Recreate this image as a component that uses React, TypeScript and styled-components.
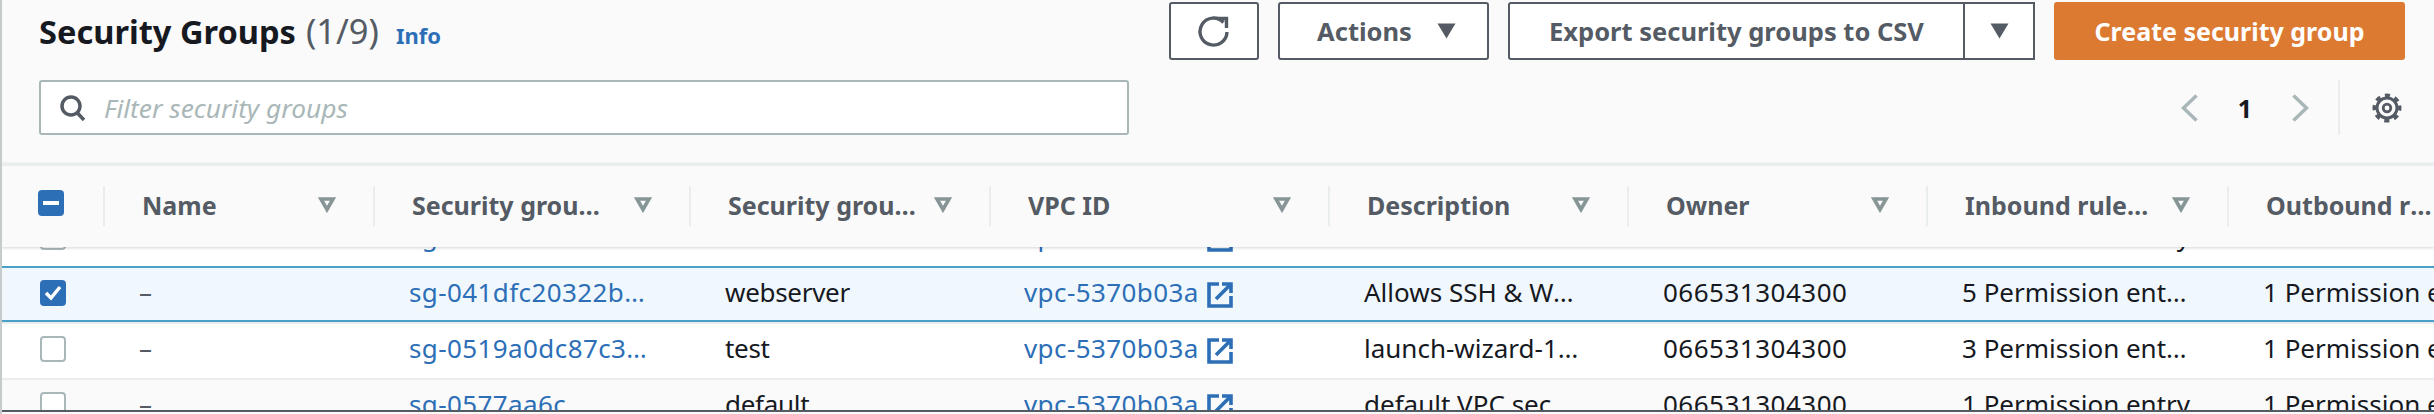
import React from 'react';
import styled, { createGlobalStyle } from 'styled-components';

const colors = {
  text: '#16191f',
  gray: '#545b64',
  muted: '#879596',
  link: '#2d6fb7',
  line: '#eaeded',
  border: '#aab7b8',
  orange: '#dd7a32',
};

const GlobalStyle = createGlobalStyle`
  html, body {
    margin: 0;
    padding: 0;
    background: #fafafa;
    font-family: "Noto Sans", "Open Sans", Arial, sans-serif;
    color: ${colors.text};
  }
  * { box-sizing: border-box; }
`;

const Page = styled.div`
  width: 2434px;
  height: 414px;
  overflow: hidden;
  border-left: 2px solid #c6cccc;
  display: flex;
  flex-direction: column;
  background: #fafafa;
`;

const Header = styled.header`
  height: 163px;
  flex: none;
  display: flex;
  justify-content: space-between;
  padding: 2px 29px 0 37px;
`;

const HeaderLeft = styled.div`
  display: flex;
  flex-direction: column;
`;

const TitleRow = styled.div`
  height: 78px;
  display: flex;
  align-items: baseline;
  padding-top: 5px;
`;

const Title = styled.h1`
  margin: 0;
  font-size: 32.6px;
  line-height: 46px;
  font-weight: 700;
`;

const Count = styled.span`
  margin-left: 10px;
  font-size: 34.5px;
  font-weight: 400;
  color: ${colors.gray};
`;

const InfoLink = styled.a`
  margin-left: 17px;
  font-size: 22px;
  font-weight: 700;
  color: ${colors.link};
`;

const FilterBox = styled.div`
  width: 1090px;
  height: 55px;
  display: flex;
  align-items: center;
  gap: 18px;
  padding-left: 19px;
  background: #fff;
  border: 2px solid ${colors.border};
  border-radius: 3px;
`;

const FilterText = styled.span`
  font-size: 26.3px;
  font-style: italic;
  color: ${colors.border};
`;

const HeaderRight = styled.div`
  display: flex;
  flex-direction: column;
  align-items: flex-end;
`;

const Actions = styled.div`
  display: flex;
  gap: 19px;
  height: 58px;
`;

const OutlineButton = styled.button<{ $wide?: number }>`
  width: ${({ $wide }) => $wide}px;
  display: flex;
  align-items: center;
  justify-content: center;
  gap: 22px;
  padding: 0;
  background: #fff;
  border: 2px solid ${colors.gray};
  border-radius: 3px;
  color: ${colors.gray};
  font: 700 25.5px "Noto Sans", sans-serif;
`;

const ActionsButton = styled(OutlineButton)`
  gap: 25px;
  padding-left: 6px;
`;

const SplitGroup = styled.div`
  display: flex;
`;

const SplitMain = styled(OutlineButton)`
  border-radius: 3px 0 0 3px;
`;

const SplitCaret = styled(OutlineButton)`
  border-left: 0;
  border-radius: 0;
`;

const PrimaryButton = styled.button`
  width: 351px;
  background: ${colors.orange};
  border: 0;
  border-radius: 3px;
  color: #fff;
  font: 700 25px "Noto Sans", sans-serif;
`;

const Pager = styled.div`
  margin-top: 20px;
  height: 55px;
  display: flex;
  align-items: center;
  padding-right: 3px;
`;

const PageNumber = styled.span`
  width: 94px;
  text-align: center;
  font-size: 25px;
  font-weight: 700;
`;

const PagerDivider = styled.div`
  width: 2px;
  height: 55px;
  margin: 0 32px 0 29px;
  background: ${colors.line};
`;

const TableHead = styled.div`
  flex: none;
  height: 84px;
  padding-top: 2px;
  border-top: 3px solid ${colors.line};
  position: relative;
  z-index: 1;
  background: #fafafa;
  box-shadow: 0 1px 3px rgba(0, 21, 41, 0.18);
`;

const columns = '101px 270px 316px 300px 339px 299px 299px 301px 300px';

const HeadGrid = styled.div`
  display: grid;
  grid-template-columns: ${columns};
  height: 40px;
  margin-top: 18px;
`;

const HeadCell = styled.div`
  display: flex;
  align-items: center;
  justify-content: space-between;
  padding: 0 37px 2px 37px;
  border-left: 2px solid ${colors.line};
  font-size: 25px;
  font-weight: 700;
  color: ${colors.gray};
  white-space: nowrap;
  overflow: hidden;
`;

const HeadCheckCell = styled.div`
  display: flex;
  align-items: center;
  padding: 0 0 6px 36px;
`;

const HeadLabel = styled.span<{ $max: number }>`
  max-width: ${({ $max }) => $max}px;
  min-width: 0;
  overflow: hidden;
  text-overflow: ellipsis;
`;

const Rows = styled.div`
  flex: 1;
  overflow: hidden;
`;

const RowList = styled.div`
  margin-top: -37px;
`;

const Row = styled.div<{ $selected?: boolean; $shade?: boolean }>`
  display: grid;
  grid-template-columns: ${columns};
  align-items: center;
  height: 56px;
  padding-bottom: 4px;
  font-size: 26px;
  background: ${({ $selected, $shade }) => ($selected ? '#f1f8fd' : $shade ? '#fafafa' : '#fff')};
  border-top: 2px solid ${({ $selected }) => ($selected ? '#4ba0c8' : colors.line)};
  box-shadow: ${({ $selected }) => ($selected ? 'inset 0 -2px 0 #4ba0c8' : 'none')};
`;

const CheckCell = styled.div`
  padding-left: 38px;
  display: flex;
`;

const Cell = styled.div`
  padding: 0 36px 2px;
  min-width: 0;
  white-space: nowrap;
  overflow: hidden;
  text-overflow: ellipsis;
`;

const DashCell = styled(Cell)`
  color: ${colors.gray};
`;

const NameCell = styled(Cell)`
  letter-spacing: -0.3px;
`;

const LinkCell = styled(Cell)`
  color: ${colors.link};
  letter-spacing: 0.4px;
`;

const VpcCell = styled(Cell)`
  display: flex;
  align-items: center;
  gap: 8px;
  color: ${colors.link};
  overflow: visible;
  padding-left: 35px;
  letter-spacing: 0.4px;
`;

const DescCell = styled(Cell)`
  padding-right: 42px;
`;

const OwnerCell = styled(Cell)`
  letter-spacing: 0.5px;
`;

const LastCell = styled(Cell)`
  overflow: visible;
`;

const Box = styled.span<{ $on?: boolean }>`
  width: 26px;
  height: 26px;
  display: flex;
  align-items: center;
  justify-content: center;
  border-radius: 4px;
  background: ${({ $on }) => ($on ? colors.link : '#fff')};
  border: ${({ $on }) => ($on ? '0' : `2px solid ${colors.border}`)};
`;

const ExternalSvg = styled.svg`
  flex: none;
  margin-top: 6px;
`;

const SearchIcon = () => (
  <svg width="26" height="26" viewBox="0 0 26 26" fill="none" stroke={colors.gray} strokeWidth="3.5">
    <circle cx="11" cy="11" r="9" />
    <path d="M17 17.5l7 7.5" />
  </svg>
);

const Caret = () => (
  <svg width="19" height="16" viewBox="0 0 19 16" fill={colors.gray}>
    <path d="M0.5 0.5h18L9.5 15.5z" />
  </svg>
);

const FilterArrow = () => (
  <svg width="18" height="16" viewBox="0 0 18 16" fill="none" stroke={colors.muted} strokeWidth="3.6" style={{ flex: 'none' }}>
    <path d="M3 2h12L9 12.5z" />
  </svg>
);

const RefreshIcon = () => (
  <svg width="32" height="32" viewBox="0 0 32 32" fill="none" stroke={colors.gray} strokeWidth="3.4">
    <path d="M25.5 7.5A13.5 13.5 0 1 0 29 17" />
    <path d="M19 3.5H28.5V13" />
  </svg>
);

const ExternalIcon = () => (
  <ExternalSvg width="26" height="26" viewBox="0 0 26 26" fill="none" stroke={colors.link} strokeWidth="3.6">
    <path d="M12 2H2v22h22V14" />
    <path d="M9 17L23 3M15 2h9v9" />
  </ExternalSvg>
);

const Chevron = ({ flip }: { flip?: boolean }) => (
  <svg width="17" height="28" viewBox="0 0 17 28" fill="none" stroke={colors.border} strokeWidth="3.5" style={flip ? { transform: 'scaleX(-1)' } : undefined}>
    <path d="M15.5 1.5L2.5 14l13 12.5" />
  </svg>
);

// cog: a ring, a dashed outer ring for the teeth and a small hub
const GearIcon = () => (
  <svg width="30" height="30" viewBox="0 0 30 30" fill="none" stroke={colors.gray}>
    <circle cx="15" cy="15" r="10" strokeWidth="3" />
    <circle cx="15" cy="15" r="12.5" strokeWidth="4" strokeDasharray="4.9 4.92" transform="rotate(-11 15 15)" />
    <circle cx="15" cy="15" r="3.8" strokeWidth="2.8" />
  </svg>
);

const heads = [
  { label: 'Name', max: 192 },
  { label: 'Security group ID', max: 192 },
  { label: 'Security group name', max: 192 },
  { label: 'VPC ID', max: 192 },
  { label: 'Description', max: 192 },
  { label: 'Owner', max: 192 },
  { label: 'Inbound rules count', max: 192 },
  { label: 'Outbound rules count', max: 170 },
];

const rows = [
  { id: 'sg-0a41c7e2d98f', name: 'launch-wizard-2', desc: 'launch-wizard-2 created', inbound: '1 Permission entry', on: false, shade: false },
  { id: 'sg-041dfc20322bd8e1f', name: 'webserver', desc: 'Allows SSH & Web access', inbound: '5 Permission entries', on: true, shade: false },
  { id: 'sg-0519a0dc87c3e1b42', name: 'test', desc: 'launch-wizard-1 created', inbound: '3 Permission entries', on: false, shade: false },
  { id: 'sg-0577aa6c', name: 'default', desc: 'default VPC sec', inbound: '1 Permission entry', on: false, shade: true },
];

const BottomBar = styled.div`
  flex: none;
  height: 4px;
  border-top: 2px solid ${colors.gray};
  background: #fafafa;
`;

const App = () => (
  <Page>
    <GlobalStyle />
    <Header>
      <HeaderLeft>
        <TitleRow>
          <Title>Security Groups</Title>
          <Count>(1/9)</Count>
          <InfoLink>Info</InfoLink>
        </TitleRow>
        <FilterBox>
          <SearchIcon />
          <FilterText>Filter security groups</FilterText>
        </FilterBox>
      </HeaderLeft>
      <HeaderRight>
        <Actions>
          <OutlineButton $wide={90}><RefreshIcon /></OutlineButton>
          <ActionsButton $wide={211}>Actions<Caret /></ActionsButton>
          <SplitGroup>
            <SplitMain $wide={457}>Export security groups to CSV</SplitMain>
            <SplitCaret $wide={70}><Caret /></SplitCaret>
          </SplitGroup>
          <PrimaryButton>Create security group</PrimaryButton>
        </Actions>
        <Pager>
          <Chevron />
          <PageNumber>1</PageNumber>
          <Chevron flip />
          <PagerDivider />
          <GearIcon />
        </Pager>
      </HeaderRight>
    </Header>
    <TableHead>
      <HeadGrid>
        <HeadCheckCell>
          <Box $on>
            <svg width="16" height="4" viewBox="0 0 16 4"><rect width="16" height="4" fill="#fff" /></svg>
          </Box>
        </HeadCheckCell>
        {heads.map((h) => (
          <HeadCell key={h.label}>
            <HeadLabel $max={h.max}>{h.label}</HeadLabel>
            <FilterArrow />
          </HeadCell>
        ))}
      </HeadGrid>
    </TableHead>
    <Rows>
      <RowList>
        {rows.map((r) => (
          <Row key={r.id} $selected={r.on} $shade={r.shade}>
            <CheckCell>
              <Box $on={r.on}>
                {r.on && (
                  <svg width="18" height="16" viewBox="0 0 18 16" fill="none" stroke="#fff" strokeWidth="3.5">
                    <path d="M2 8l5 5 9-11" />
                  </svg>
                )}
              </Box>
            </CheckCell>
            <DashCell>–</DashCell>
            <LinkCell>{r.id}</LinkCell>
            <NameCell>{r.name}</NameCell>
            <VpcCell>vpc-5370b03a<ExternalIcon /></VpcCell>
            <DescCell>{r.desc}</DescCell>
            <OwnerCell>066531304300</OwnerCell>
            <Cell>{r.inbound}</Cell>
            <LastCell>1 Permission entry</LastCell>
          </Row>
        ))}
      </RowList>
    </Rows>
    <BottomBar />
  </Page>
);

export default App;
